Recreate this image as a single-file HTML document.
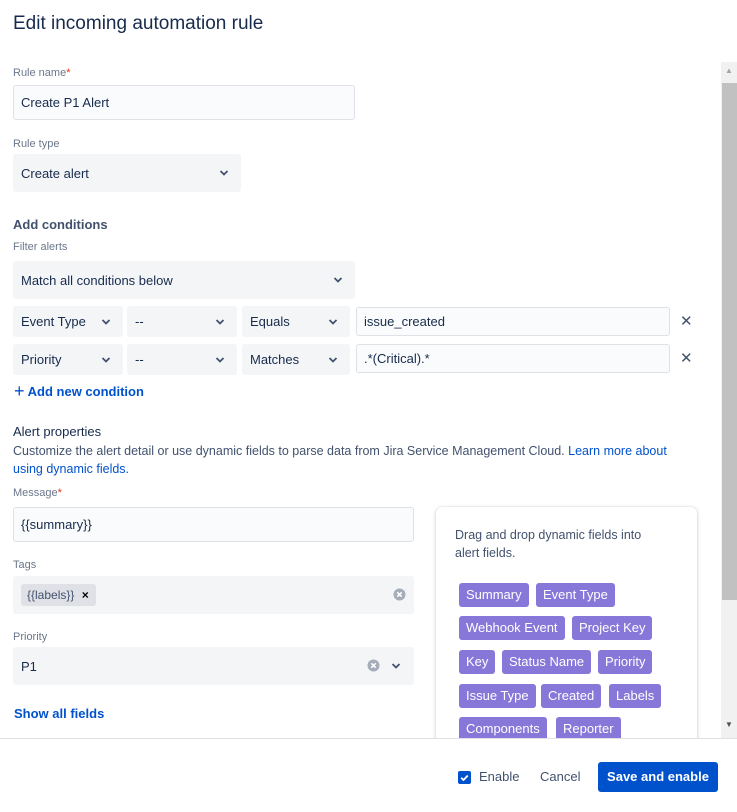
<!DOCTYPE html>
<html><head><meta charset="utf-8"><style>
*{box-sizing:border-box;margin:0;padding:0}
body{width:737px;height:812px;overflow:hidden;background:#fff;font-family:"Liberation Sans",sans-serif;color:#172b4d;position:relative;font-size:13px}
.a{position:absolute;white-space:nowrap}
.lbl{font-size:11px;color:#6b778c}
.req{color:#de350b}
.inp{position:absolute;background:#fafbfc;border:1px solid #dfe1e6;border-radius:3px;padding-left:7px;display:flex;align-items:center;font-size:13px}
.sel{position:absolute;background:#f4f5f7;border-radius:3px;padding-left:8px;display:flex;align-items:center;font-size:13px}
.chev{position:absolute;right:12px;top:50%;margin-top:-4px}
.x{position:absolute;font-size:15px;color:#42526e}
.tag{position:absolute;background:#8777d9;color:#fff;border-radius:3px;height:24px;line-height:24px;padding:0 7px;font-size:13px}
.blue{color:#0052cc}
</style></head><body>
<svg width="0" height="0" style="position:absolute"><defs><symbol id="cv" viewBox="0 0 10 8"><path d="M1.5 2l3.5 3.5 3.5-3.5" stroke="#42526e" stroke-width="1.8" fill="none"/></symbol></defs></svg>

<div class="a" style="left:13px;top:13px;font-size:19px;color:#172b4d">Edit incoming automation rule</div>

<div class="a lbl" style="left:13px;top:67px">Rule name<span class="req">*</span></div>
<div class="inp" style="left:13px;top:85px;width:342px;height:35px">Create P1 Alert</div>

<div class="a lbl" style="left:13px;top:138px">Rule type</div>
<div class="sel" style="left:13px;top:154px;width:228px;height:38px">Create alert<svg class="chev" width="10" height="8"><use href="#cv"/></svg></div>

<div class="a" style="left:13px;top:217px;font-size:13px;font-weight:bold;color:#42526e">Add conditions</div>
<div class="a lbl" style="left:13px;top:241px">Filter alerts</div>
<div class="sel" style="left:13px;top:261px;width:342px;height:38px">Match all conditions below<svg class="chev" width="10" height="8"><use href="#cv"/></svg></div>

<div class="sel" style="left:13px;top:306px;width:110px;height:31px">Event Type<svg class="chev" width="10" height="8"><use href="#cv"/></svg></div>
<div class="sel" style="left:127px;top:306px;width:110px;height:31px">--<svg class="chev" width="10" height="8"><use href="#cv"/></svg></div>
<div class="sel" style="left:242px;top:306px;width:108px;height:31px">Equals<svg class="chev" width="10" height="8"><use href="#cv"/></svg></div>
<div class="inp" style="left:356px;top:307px;width:314px;height:29px">issue_created</div>
<div class="x" style="left:680px;top:312px">✕</div>

<div class="sel" style="left:13px;top:344px;width:110px;height:31px">Priority<svg class="chev" width="10" height="8"><use href="#cv"/></svg></div>
<div class="sel" style="left:127px;top:344px;width:110px;height:31px">--<svg class="chev" width="10" height="8"><use href="#cv"/></svg></div>
<div class="sel" style="left:242px;top:344px;width:108px;height:31px">Matches<svg class="chev" width="10" height="8"><use href="#cv"/></svg></div>
<div class="inp" style="left:356px;top:344px;width:314px;height:29px">.*(Critical).*</div>
<div class="x" style="left:680px;top:349px">✕</div>

<div class="a blue" style="left:14px;top:380px;font-size:13px;font-weight:bold"><span style="font-size:18px;font-weight:normal;position:relative;top:1px">+</span> Add new condition</div>

<div class="a" style="left:13px;top:424px;font-size:13px;color:#172b4d">Alert properties</div>
<div class="a" style="left:13px;top:442px;font-size:12.5px;color:#42526e;line-height:18px;white-space:normal;width:690px">Customize the alert detail or use dynamic fields to parse data from Jira Service Management Cloud. <span class="blue">Learn more about<br>using dynamic fields.</span></div>

<div class="a lbl" style="left:13px;top:487px">Message<span class="req">*</span></div>
<div class="inp" style="left:13px;top:507px;width:401px;height:35px">{{summary}}</div>

<div class="a lbl" style="left:13px;top:559px">Tags</div>
<div class="sel" style="left:13px;top:576px;width:401px;height:38px"></div>
<div class="a" style="left:21px;top:584px;width:75px;height:22px;background:#dfe1e6;border-radius:3px;font-size:12px;line-height:22px;padding-left:6px;color:#42526e">{{labels}} <b style="color:#000;margin-left:4px">×</b></div>
<svg class="a" style="left:393px;top:588px" width="13" height="13" viewBox="0 0 13 13"><circle cx="6.5" cy="6.5" r="6" fill="#a5adba"/><path d="M4.3 4.3l4.4 4.4M8.7 4.3l-4.4 4.4" stroke="#fff" stroke-width="1.6"/></svg>

<div class="a lbl" style="left:13px;top:631px">Priority</div>
<div class="sel" style="left:13px;top:647px;width:401px;height:38px">P1</div>
<svg class="a" style="left:367px;top:659px" width="13" height="13" viewBox="0 0 13 13"><circle cx="6.5" cy="6.5" r="6" fill="#a5adba"/><path d="M4.3 4.3l4.4 4.4M8.7 4.3l-4.4 4.4" stroke="#fff" stroke-width="1.6"/></svg>
<svg class="a" style="left:391px;top:662px" width="10" height="8"><use href="#cv"/></svg>

<div class="a blue" style="left:14px;top:706px;font-size:13px;font-weight:bold">Show all fields</div>

<div class="a" style="left:436px;top:507px;width:261px;height:260px;background:#fff;border-radius:6px;box-shadow:0 1px 4px rgba(9,30,66,.2),0 0 1px rgba(9,30,66,.2)"></div>
<div class="a" style="left:455px;top:526px;font-size:12.5px;color:#42526e;line-height:18px">Drag and drop dynamic fields into<br>alert fields.</div>
<div class="tag" style="left:459px;top:583px">Summary</div>
<div class="tag" style="left:536px;top:583px">Event Type</div>
<div class="tag" style="left:459px;top:616px">Webhook Event</div>
<div class="tag" style="left:572px;top:616px">Project Key</div>
<div class="tag" style="left:459px;top:650px">Key</div>
<div class="tag" style="left:502px;top:650px">Status Name</div>
<div class="tag" style="left:598px;top:650px">Priority</div>
<div class="tag" style="left:459px;top:684px">Issue Type</div>
<div class="tag" style="left:541px;top:684px">Created</div>
<div class="tag" style="left:609px;top:684px">Labels</div>
<div class="tag" style="left:459px;top:717px">Components</div>
<div class="tag" style="left:556px;top:717px">Reporter</div>

<div class="a" style="left:721px;top:62px;width:16px;height:676px;background:#f1f1f1"></div>
<div class="a" style="left:722px;top:83px;width:15px;height:517px;background:#c1c1c1"></div>
<div class="a" style="left:725px;top:66px;font-size:8px;color:#a3a3a3">▲</div>
<div class="a" style="left:725px;top:720px;font-size:8px;color:#505050">▼</div>

<div class="a" style="left:0;top:738px;width:737px;height:74px;background:#fff;border-top:1px solid #dfe1e6"></div>
<div class="a" style="left:458px;top:771px;width:13px;height:13px;background:#0052cc;border-radius:2px"></div>
<svg class="a" style="left:458px;top:771px" width="13" height="13"><path d="M3.2 6.7l2.3 2.3 4.3-4.5" stroke="#fff" stroke-width="1.8" fill="none"/></svg>
<div class="a" style="left:479px;top:769px;font-size:13px;color:#42526e">Enable</div>
<div class="a" style="left:540px;top:769px;font-size:13px;color:#42526e">Cancel</div>
<div class="a" style="left:598px;top:762px;width:120px;height:30px;background:#0052cc;border-radius:3px;color:#fff;font-weight:bold;font-size:13px;text-align:center;line-height:30px">Save and enable</div>
</body></html>
